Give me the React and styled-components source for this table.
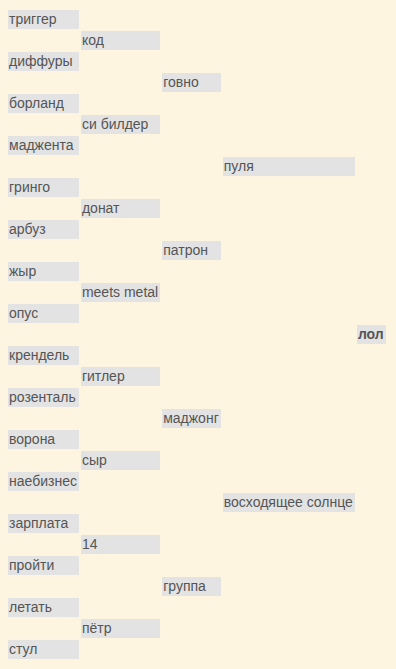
import styled, { createGlobalStyle } from "styled-components";

const GlobalStyle = createGlobalStyle`
  html, body {
    margin: 0;
    background: #fdf5df;
  }
  body {
    font-family: "Liberation Sans", Arial, sans-serif;
    font-size: 14px;
    color: #555;
  }
`;

// in-order list of the bracket, leaves first level
const words = [
  "триггер", "код", "диффуры", "говно", "борланд", "си билдер", "маджента",
  "пуля", "гринго", "донат", "арбуз", "патрон", "жыр", "meets metal", "опус",
  "лол", "крендель", "гитлер", "розенталь", "маджонг", "ворона", "сыр",
  "наебизнес", "восходящее солнце", "зарплата", "14", "пройти", "группа",
  "летать", "пётр", "стул",
];

// depth = number of trailing 1-bits in the index
const depthOf = (i) => {
  let d = 0;
  while (i & 1) {
    d++;
    i >>= 1;
  }
  return d;
};

const Bracket = styled.div`
  display: grid;
  grid-template-columns: repeat(5, max-content);
  grid-auto-rows: 19px;
  gap: 2px;
  padding: 10px 8px 8px 8px;
`;

const Cell = styled.div`
  grid-column: ${(p) => p.$col + 1};
  grid-row: ${(p) => p.$row + 1};
  background: #e3e3e3;
  line-height: 19px;
  padding: 0 2px 0 1px;
  white-space: nowrap;
  font-weight: ${(p) => (p.$final ? "bold" : "normal")};
`;

export default function App() {
  return (
    <>
      <GlobalStyle />
      <Bracket>
        {words.map((w, i) => {
          const d = depthOf(i);
          return (
            <Cell key={i} $col={d} $row={i} $final={d === 4}>
              {w}
            </Cell>
          );
        })}
      </Bracket>
    </>
  );
}
